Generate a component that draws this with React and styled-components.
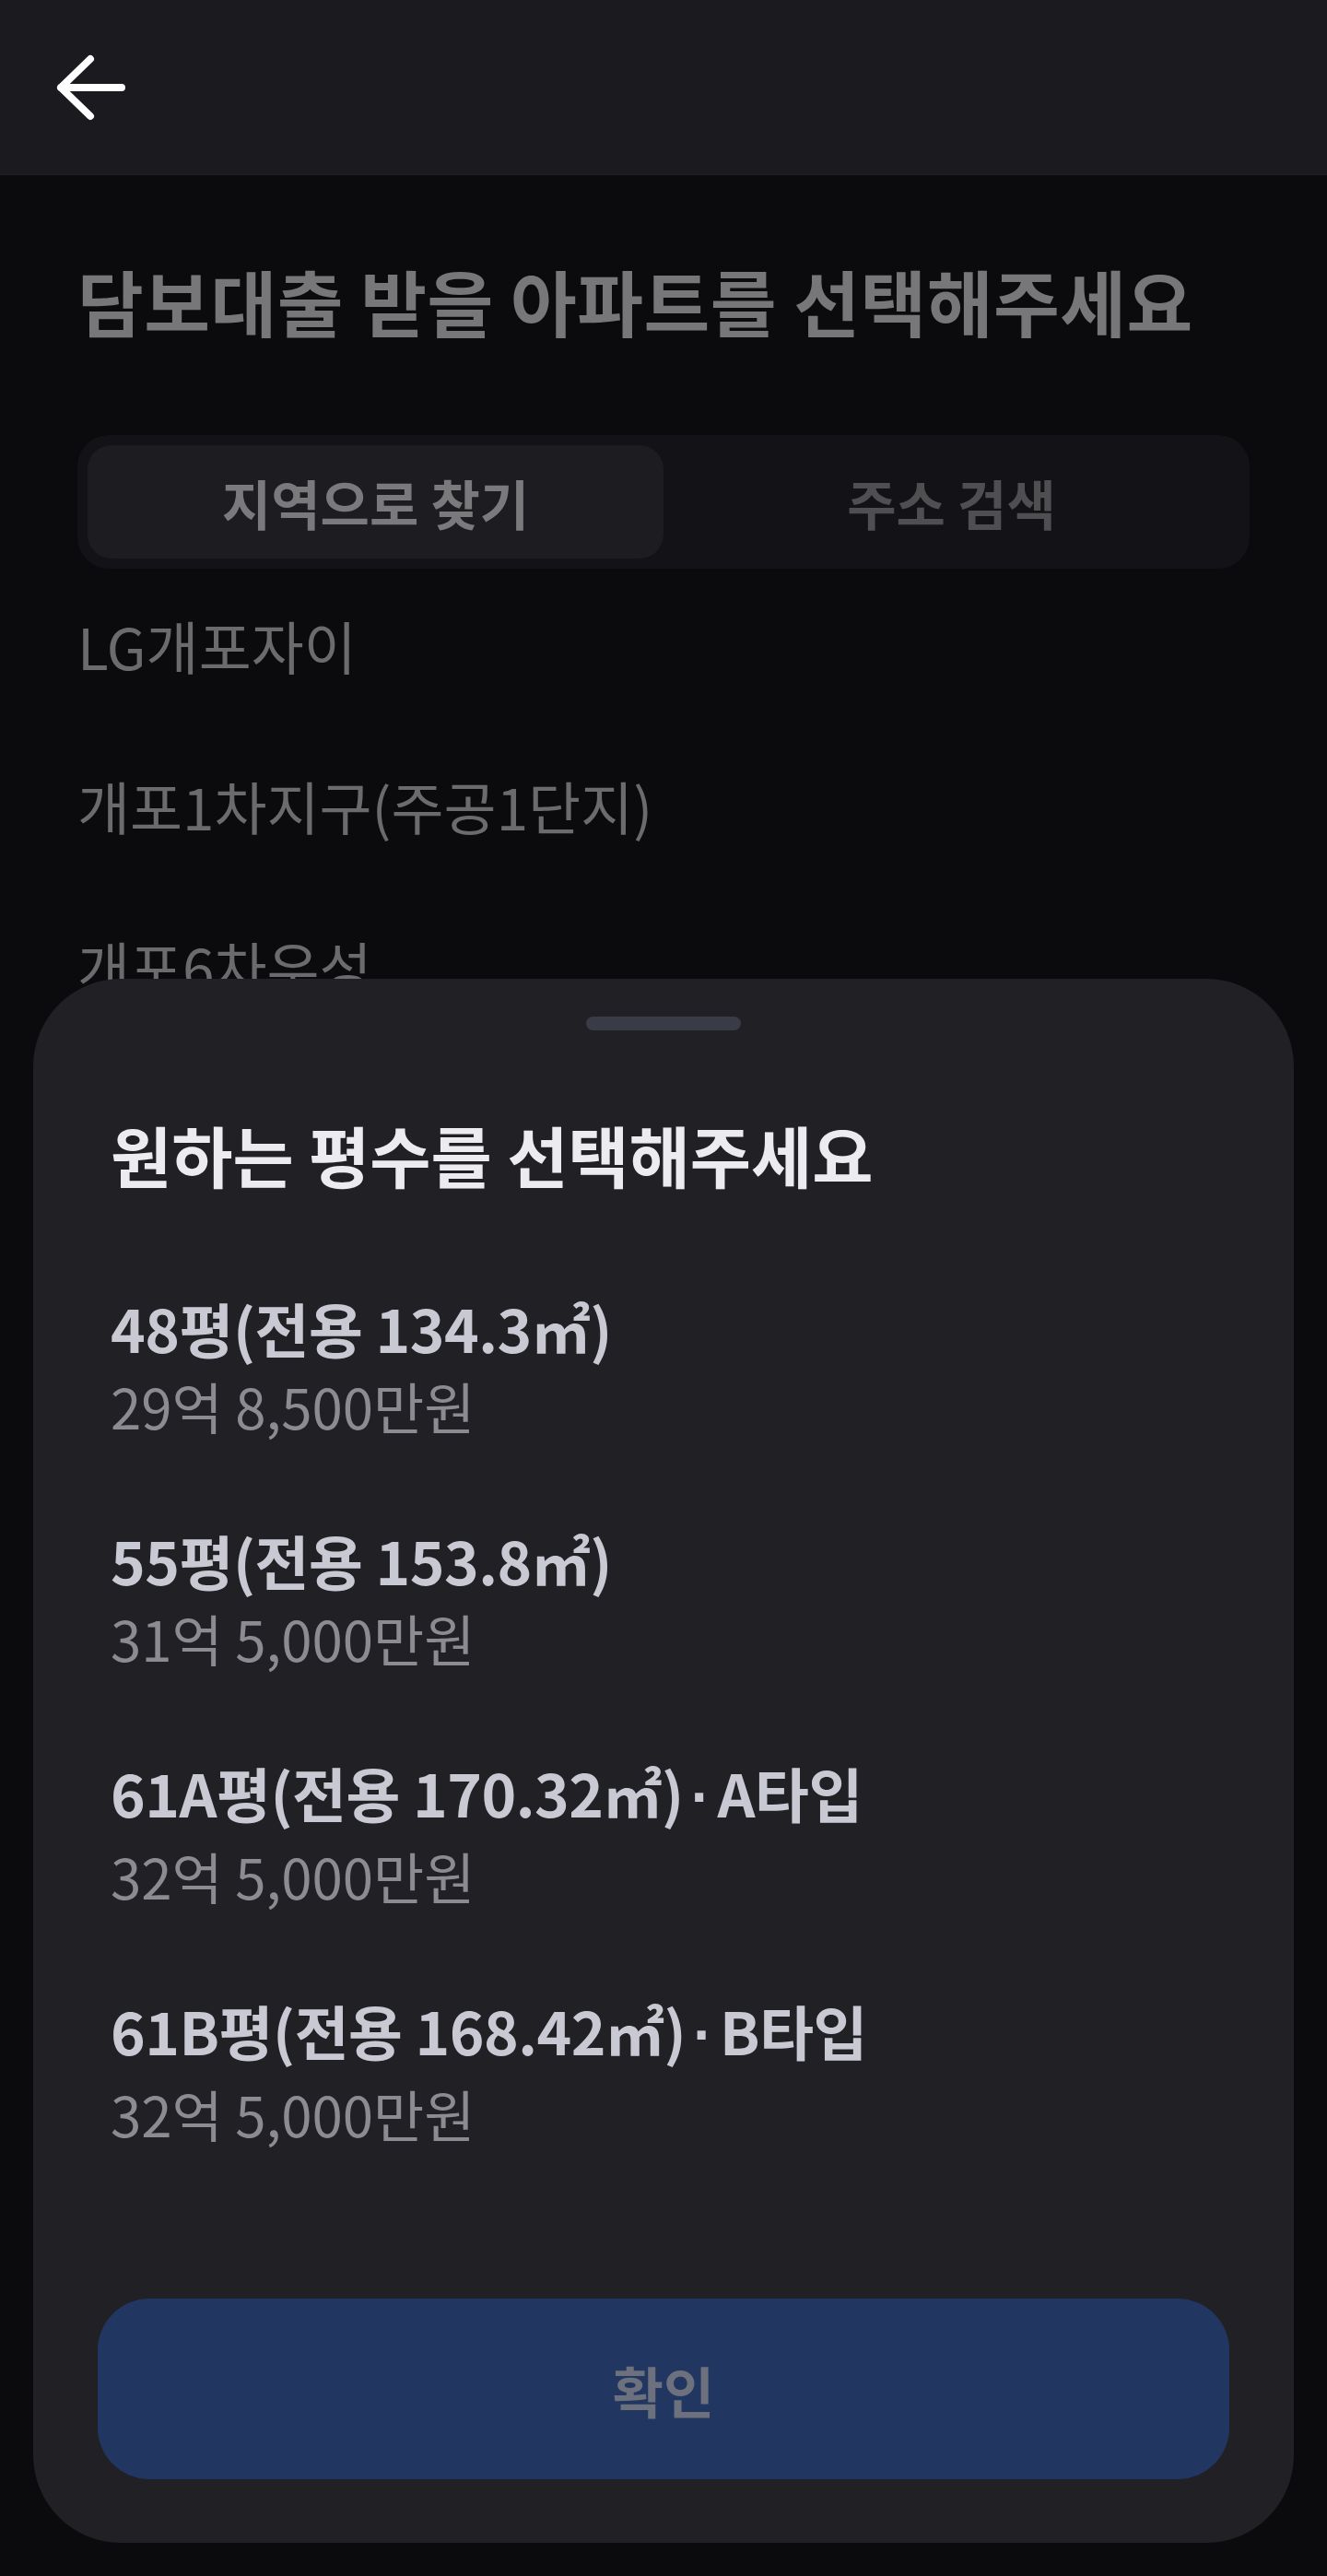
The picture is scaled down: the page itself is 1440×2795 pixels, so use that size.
import React from 'react';
import styled, { createGlobalStyle } from 'styled-components';

// page-wide reset
const GlobalStyle = createGlobalStyle`
  html, body {
    margin: 0;
    padding: 0;
    background: #0b0b0e;
  }
  body {
    font-family: 'Noto Sans CJK KR', 'Noto Sans', sans-serif;
  }
  * {
    box-sizing: border-box;
  }
`;

const APARTMENTS = ['LG개포자이', '개포1차지구(주공1단지)', '개포6차우성'];

const SIZES = [
  { title: '48평(전용 134.3㎡)', price: '29억 8,500만원' },
  { title: '55평(전용 153.8㎡)', price: '31억 5,000만원' },
  { title: '61A평(전용 170.32㎡)', type: 'A타입', price: '32억 5,000만원' },
  { title: '61B평(전용 168.42㎡)', type: 'B타입', price: '32억 5,000만원' },
];

const BackIcon = () => (
  <svg width='80' height='72' viewBox='0 0 80 72' fill='none'>
    <path
      d='M38 5 L6 36 L38 67 M6 36 H72'
      stroke='#ffffff'
      strokeWidth='8'
      strokeLinecap='round'
      strokeLinejoin='round'
    />
  </svg>
);

const App = () => {
  return (
    <>
      <GlobalStyle />
      <StyledScreen>
        {/* Top bar */}
        <StyledHeader>
          <BackButton aria-label='뒤로가기'>
            <BackIcon />
          </BackButton>
        </StyledHeader>

        {/* Page behind the sheet */}
        <StyledContent>
          <PageTitle>담보대출 받을 아파트를 선택해주세요</PageTitle>
          <Segmented>
            <Segment $active>지역으로 찾기</Segment>
            <Segment>주소 검색</Segment>
          </Segmented>
          <AptList>
            {APARTMENTS.map((name) => (
              <AptRow key={name}>{name}</AptRow>
            ))}
          </AptList>
        </StyledContent>

        {/* Bottom sheet */}
        <Sheet role='dialog'>
          <Handle />
          <SheetBody>
            <SheetTitle>원하는 평수를 선택해주세요</SheetTitle>
            <SizeList>
              {SIZES.map((s) => (
                <SizeItem key={s.title}>
                  <SizeTitle>
                    {s.title}
                    {s.type && (
                      <>
                        <Dot>·</Dot>
                        {s.type}
                      </>
                    )}
                  </SizeTitle>
                  <SizePrice>{s.price}</SizePrice>
                </SizeItem>
              ))}
            </SizeList>
          </SheetBody>
          <ConfirmButton disabled>확인</ConfirmButton>
        </Sheet>
      </StyledScreen>
    </>
  );
};

export default App;

// Styled Components Area
const StyledScreen = styled.div`
  position: relative;
  width: 1440px;
  height: 2795px;
  overflow: hidden;
  background: #0b0b0e;
`;

const StyledHeader = styled.header`
  height: 190px;
  display: flex;
  align-items: center;
  padding-left: 60px;
  background: #1a1a1f;
  border-bottom: 1px solid #1f1f25;
`;

const BackButton = styled.button`
  display: flex;
  align-items: center;
  justify-content: center;
  padding: 0;
  border: none;
  background: none;
  cursor: pointer;
`;

const StyledContent = styled.main`
  padding: 0 84px;
`;

const PageTitle = styled.h1`
  margin: 91px 0 0;
  font-size: 78px;
  line-height: 90px;
  font-weight: 700;
  color: #777779;
  letter-spacing: 0.5px;
  white-space: nowrap;
`;

const Segmented = styled.div`
  margin-top: 101px;
  height: 145px;
  padding: 11px;
  display: grid;
  grid-template-columns: 1fr 1fr;
  background: #131317;
  border-radius: 34px;
`;

const Segment = styled.div`
  display: flex;
  align-items: center;
  justify-content: center;
  border-radius: 26px;
  font-size: 58px;
  font-weight: 600;
  background: ${({ $active }) => ($active ? '#1c1c21' : 'transparent')};
  color: ${({ $active }) => ($active ? '#7a7a7c' : '#4f4f52')};
`;

const AptList = styled.ul`
  list-style: none;
  margin: -4px 0 0;
  padding: 0;
`;

const AptRow = styled.li`
  height: 174px;
  display: flex;
  align-items: center;
  font-size: 62px;
  color: #6b6b6d;
`;

const Sheet = styled.section`
  position: absolute;
  left: 36px;
  right: 36px;
  top: 1062px;
  bottom: 36px;
  display: flex;
  flex-direction: column;
  background: #202025;
  border-radius: 95px;
  padding-bottom: 69px;
`;

const Handle = styled.div`
  align-self: center;
  margin-top: 41px;
  width: 168px;
  height: 15px;
  border-radius: 8px;
  background: #393b47;
`;

const SheetBody = styled.div`
  padding: 0 84px;
`;

const SheetTitle = styled.h2`
  margin: 91px 0 0;
  font-size: 72px;
  line-height: 86px;
  font-weight: 700;
  color: #ebebf0;
`;

const SizeList = styled.ul`
  list-style: none;
  margin: 62px 0 0;
  padding: 0;
`;

const SizeItem = styled.li`
  padding: 45px 0 46px;
  display: flex;
  flex-direction: column;
  gap: 9px;
`;

const SizeTitle = styled.div`
  font-size: 64px;
  line-height: 76px;
  font-weight: 700;
  color: #c9c9d3;
  letter-spacing: -0.5px;
`;

const Dot = styled.span`
  font-family: 'Liberation Sans', sans-serif;
  margin: 0 8px;
`;

const SizePrice = styled.div`
  font-size: 60px;
  line-height: 76px;
  color: #8b8b91;
`;

const ConfirmButton = styled.button`
  margin: auto 70px 0;
  height: 196px;
  border: none;
  border-radius: 56px;
  background: #213660;
  color: #6d717e;
  font-family: inherit;
  font-size: 60px;
  font-weight: 700;
`;
